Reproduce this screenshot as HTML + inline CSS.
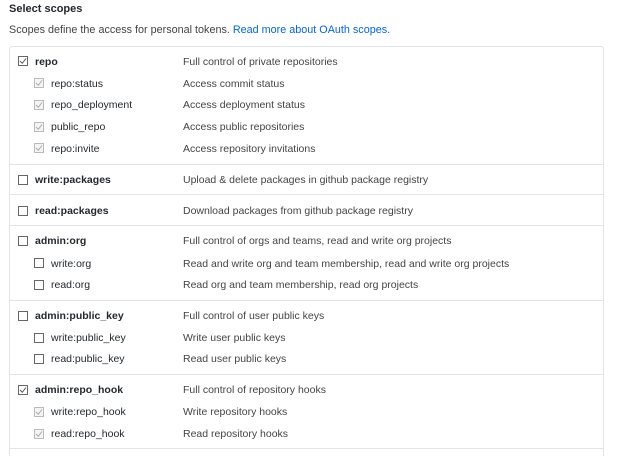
<!DOCTYPE html>
<html style="width:624px;height:456px;overflow:hidden"><head><meta charset="utf-8"><style>
*{margin:0;padding:0;box-sizing:border-box}
body{width:624px;height:456px;background:#fff;font-family:"Liberation Sans",sans-serif;color:#24292e;position:relative;overflow:hidden}
.t{position:absolute;white-space:nowrap;font-size:10.5px;line-height:14px;margin-top:1px}
.h{left:9px;top:1px;font-weight:bold;font-size:11px}
.box{position:absolute;left:9px;top:46px;width:595px;height:410px;border:1px solid #e1e4e8;border-bottom:none;border-radius:3px 3px 0 0}
.sep{position:absolute;left:10px;width:593px;height:1px;background:#e1e4e8}
.cb{position:absolute;width:10px;height:10px;border:1px solid #666;background:#fff}
.cb.g{border-color:#bbb;background:#f4f4f4}
.cb svg{position:absolute;left:0;top:0}
.b{font-weight:bold}
.d{color:#444}
</style></head><body>
<div class="t h">Select scopes</div>
<div class="t" style="left:9px;top:22px;font-size:10.8px;color:#444">Scopes define the access for personal tokens. <span style="color:#0366d6">Read more about OAuth scopes.</span></div>
<div class="box"></div>
<div class="sep" style="top:164px"></div>
<div class="sep" style="top:194px"></div>
<div class="sep" style="top:225px"></div>
<div class="sep" style="top:300px"></div>
<div class="sep" style="top:374px"></div>
<div class="sep" style="top:448px"></div>

<div class="cb" style="left:18px;top:56px"><svg width="8" height="8"><path d="M1 4 L3.3 6.3 L7 1.5" stroke="#555" stroke-width="1" fill="none"/></svg></div>
<div class="t b" style="left:35px;top:54px">repo</div><div class="t d" style="left:183px;top:54px">Full control of private repositories</div>

<div class="cb g" style="left:34px;top:78px"><svg width="8" height="8"><path d="M1 4 L3.3 6.3 L7 1.5" stroke="#aaa" fill="none"/></svg></div>
<div class="t" style="left:51px;top:76px">repo:status</div><div class="t d" style="left:183px;top:76px">Access commit status</div>
<div class="cb g" style="left:34px;top:100px"><svg width="8" height="8"><path d="M1 4 L3.3 6.3 L7 1.5" stroke="#aaa" fill="none"/></svg></div>
<div class="t" style="left:51px;top:97px">repo_deployment</div><div class="t d" style="left:183px;top:97px">Access deployment status</div>
<div class="cb g" style="left:34px;top:122px"><svg width="8" height="8"><path d="M1 4 L3.3 6.3 L7 1.5" stroke="#aaa" fill="none"/></svg></div>
<div class="t" style="left:51px;top:119px">public_repo</div><div class="t d" style="left:183px;top:119px">Access public repositories</div>
<div class="cb g" style="left:34px;top:143px"><svg width="8" height="8"><path d="M1 4 L3.3 6.3 L7 1.5" stroke="#aaa" fill="none"/></svg></div>
<div class="t" style="left:51px;top:141px">repo:invite</div><div class="t d" style="left:183px;top:141px">Access repository invitations</div>

<div class="cb" style="left:18px;top:175px"></div>
<div class="t b" style="left:35px;top:172px">write:packages</div><div class="t d" style="left:183px;top:172px">Upload &amp; delete packages in github package registry</div>

<div class="cb" style="left:18px;top:206px"></div>
<div class="t b" style="left:35px;top:203px">read:packages</div><div class="t d" style="left:183px;top:203px">Download packages from github package registry</div>

<div class="cb" style="left:18px;top:236px"></div>
<div class="t b" style="left:35px;top:233px">admin:org</div><div class="t d" style="left:183px;top:233px">Full control of orgs and teams, read and write org projects</div>
<div class="cb" style="left:34px;top:258px"></div>
<div class="t" style="left:51px;top:256px">write:org</div><div class="t d" style="left:183px;top:256px">Read and write org and team membership, read and write org projects</div>
<div class="cb" style="left:34px;top:280px"></div>
<div class="t" style="left:51px;top:277px">read:org</div><div class="t d" style="left:183px;top:277px">Read org and team membership, read org projects</div>

<div class="cb" style="left:18px;top:311px"></div>
<div class="t b" style="left:35px;top:308px">admin:public_key</div><div class="t d" style="left:183px;top:308px">Full control of user public keys</div>
<div class="cb" style="left:34px;top:333px"></div>
<div class="t" style="left:51px;top:330px">write:public_key</div><div class="t d" style="left:183px;top:330px">Write user public keys</div>
<div class="cb" style="left:34px;top:354px"></div>
<div class="t" style="left:51px;top:351px">read:public_key</div><div class="t d" style="left:183px;top:351px">Read user public keys</div>

<div class="cb" style="left:18px;top:385px"><svg width="8" height="8"><path d="M1 4 L3.3 6.3 L7 1.5" stroke="#555" fill="none"/></svg></div>
<div class="t b" style="left:35px;top:382px">admin:repo_hook</div><div class="t d" style="left:183px;top:382px">Full control of repository hooks</div>
<div class="cb g" style="left:34px;top:407px"><svg width="8" height="8"><path d="M1 4 L3.3 6.3 L7 1.5" stroke="#aaa" fill="none"/></svg></div>
<div class="t" style="left:51px;top:404px">write:repo_hook</div><div class="t d" style="left:183px;top:404px">Write repository hooks</div>
<div class="cb g" style="left:34px;top:429px"><svg width="8" height="8"><path d="M1 4 L3.3 6.3 L7 1.5" stroke="#aaa" fill="none"/></svg></div>
<div class="t" style="left:51px;top:426px">read:repo_hook</div><div class="t d" style="left:183px;top:426px">Read repository hooks</div>
</body></html>
